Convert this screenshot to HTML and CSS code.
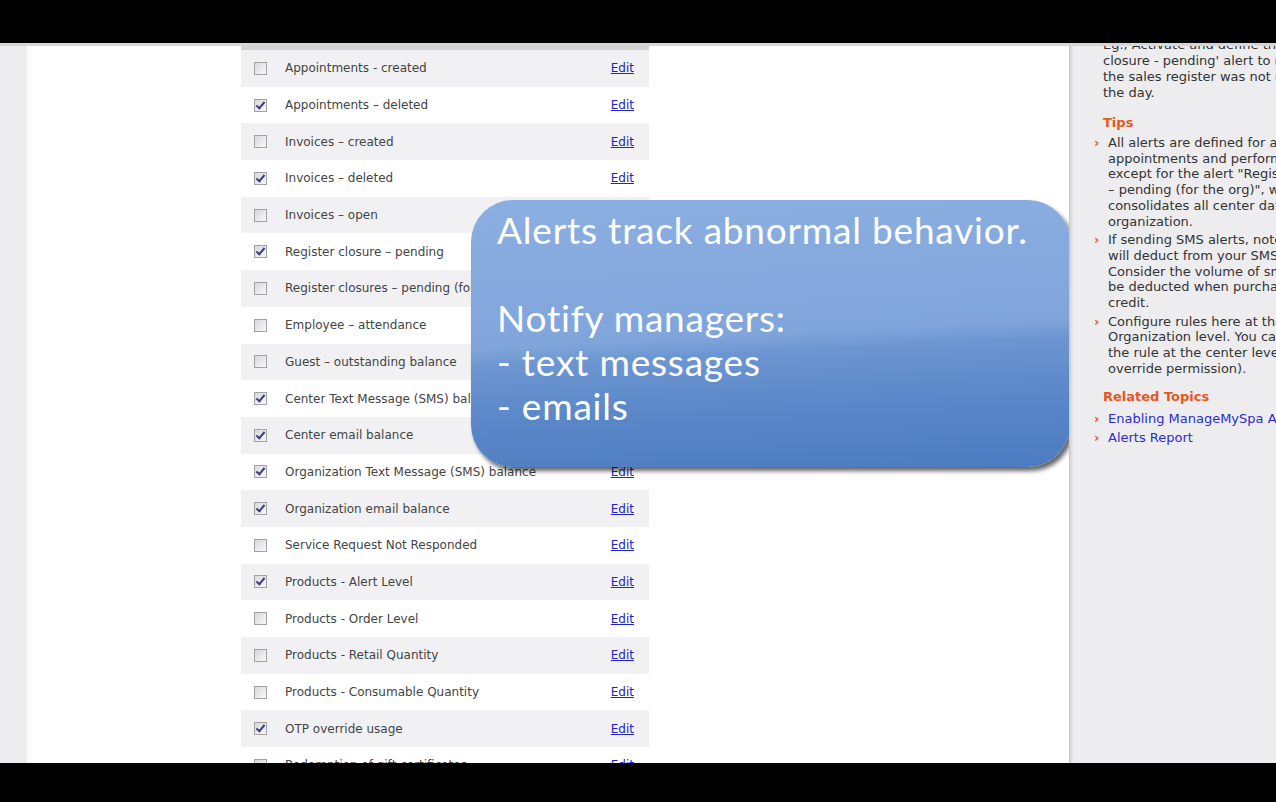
FILE: index.html
```html
<!DOCTYPE html>
<html>
<head>
  <title>Alerts</title>
  <link rel="stylesheet" href="styles.css">
</head>
<body>
  <div class="topbar"></div>
  <div class="screen">
    <div class="left-strip"></div>
    <div class="main">
      <div class="alerts-list">
        <div class="alerts-head"></div>
        <div class="alert-row"><span class="box"></span><span class="alert-name">Appointments - created</span><a href="#" class="edit">Edit</a></div>
        <div class="alert-row"><span class="box checked"></span><span class="alert-name">Appointments – deleted</span><a href="#" class="edit">Edit</a></div>
        <div class="alert-row"><span class="box"></span><span class="alert-name">Invoices – created</span><a href="#" class="edit">Edit</a></div>
        <div class="alert-row"><span class="box checked"></span><span class="alert-name">Invoices – deleted</span><a href="#" class="edit">Edit</a></div>
        <div class="alert-row"><span class="box"></span><span class="alert-name">Invoices – open</span><a href="#" class="edit">Edit</a></div>
        <div class="alert-row"><span class="box checked"></span><span class="alert-name">Register closure – pending</span><a href="#" class="edit">Edit</a></div>
        <div class="alert-row"><span class="box"></span><span class="alert-name">Register closures – pending (for the org)</span><a href="#" class="edit">Edit</a></div>
        <div class="alert-row"><span class="box"></span><span class="alert-name">Employee – attendance</span><a href="#" class="edit">Edit</a></div>
        <div class="alert-row"><span class="box"></span><span class="alert-name">Guest – outstanding balance</span><a href="#" class="edit">Edit</a></div>
        <div class="alert-row"><span class="box checked"></span><span class="alert-name">Center Text Message (SMS) balance</span><a href="#" class="edit">Edit</a></div>
        <div class="alert-row"><span class="box checked"></span><span class="alert-name">Center email balance</span><a href="#" class="edit">Edit</a></div>
        <div class="alert-row"><span class="box checked"></span><span class="alert-name">Organization Text Message (SMS) balance</span><a href="#" class="edit">Edit</a></div>
        <div class="alert-row"><span class="box checked"></span><span class="alert-name">Organization email balance</span><a href="#" class="edit">Edit</a></div>
        <div class="alert-row"><span class="box"></span><span class="alert-name">Service Request Not Responded</span><a href="#" class="edit">Edit</a></div>
        <div class="alert-row"><span class="box checked"></span><span class="alert-name">Products - Alert Level</span><a href="#" class="edit">Edit</a></div>
        <div class="alert-row"><span class="box"></span><span class="alert-name">Products - Order Level</span><a href="#" class="edit">Edit</a></div>
        <div class="alert-row"><span class="box"></span><span class="alert-name">Products - Retail Quantity</span><a href="#" class="edit">Edit</a></div>
        <div class="alert-row"><span class="box"></span><span class="alert-name">Products - Consumable Quantity</span><a href="#" class="edit">Edit</a></div>
        <div class="alert-row"><span class="box checked"></span><span class="alert-name">OTP override usage</span><a href="#" class="edit">Edit</a></div>
        <div class="alert-row"><span class="box"></span><span class="alert-name">Redemption of gift certificates</span><a href="#" class="edit">Edit</a></div>
      </div>

      <div class="callout">
        <p>Alerts track abnormal behavior.</p>
        <p>&nbsp;</p>
        <p>Notify managers:</p>
        <p>- text messages</p>
        <p>- emails</p>
      </div>
    </div>
    <div class="divider"></div>
    <div class="sidebar">
      <p class="intro">Eg., Activate and define the 'Register<br>closure - pending' alert to notify you if<br>the sales register was not closed for<br>the day.</p>

      <h3>Tips</h3>
      <ul class="tips">
        <li>All alerts are defined for a center:<br>appointments and performance,<br>except for the alert "Register closures<br>– pending (for the org)", which<br>consolidates all center data for the<br>organization.</li>
        <li>If sending SMS alerts, note that each<br>will deduct from your SMS credit.<br>Consider the volume of sms that will<br>be deducted when purchasing SMS<br>credit.</li>
        <li>Configure rules here at the<br>Organization level. You can override<br>the rule at the center level (with<br>override permission).</li>
      </ul>

      <h3 class="related">Related Topics</h3>
      <ul class="links">
        <li><a href="#">Enabling ManageMySpa Alerts</a></li>
        <li><a href="#">Alerts Report</a></li>
      </ul>
    </div>
  </div>
  <div class="bottombar"></div>
</body>
</html>
```

FILE: styles.css
```css
body {
  margin: 0;
  padding: 0;
  background-color: #000;
  font-family: "DejaVu Sans", Verdana, sans-serif;
  overflow: hidden;
}

.topbar {
  height: 43px;
  background-color: #000;
}

.bottombar {
  height: 39px;
  background-color: #000;
}

.screen {
  display: flex;
  height: 717px;
  border-top: 3px solid #d6d6d8;
  overflow: hidden;
}

.left-strip {
  width: 26px;
  background-color: #ececef;
  border-right: 2px solid #f4f4f6;
}

.main {
  flex: 1;
  position: relative;
  background-color: #fff;
  padding-left: 213px;
  overflow: hidden;
}

.divider {
  width: 4px;
  background: linear-gradient(to right, #c4c4c6, #dcdcde, #e8e8ea);
}

.alerts-list {
  width: 408px;
}

.alerts-head {
  height: 4px;
  background-color: #d2d2d4;
}

.alert-row {
  display: flex;
  align-items: center;
  height: 36.7px;
  font-size: 12px;
  color: #444;
}

.alert-row:nth-child(even) {
  background-color: #f1f1f3;
}

.box {
  position: relative;
  width: 11px;
  height: 11px;
  margin-left: 13px;
  margin-right: 18px;
  border: 1px solid #a2a2a6;
  background: linear-gradient(135deg, #d8d8dc, #f8f8fa);
}

.box.checked::after {
  content: "";
  position: absolute;
  left: 3px;
  top: 0px;
  width: 3px;
  height: 7px;
  border-right: 2px solid #3d3d80;
  border-bottom: 2px solid #3d3d80;
  transform: rotate(40deg);
}

.alert-name {
  flex: 1;
  white-space: nowrap;
}

.edit {
  color: #2323cc;
  margin-right: 15px;
}

.callout {
  position: absolute;
  left: 443px;
  top: 154px;
  width: 599px;
  height: 267px;
  box-sizing: border-box;
  padding: 8px 0 0 26px;
  border-radius: 42px;
  background: linear-gradient(177deg, #8cafe1 0%, #80a5db 50%, #6d96d1 56%, #5a87c8 75%, #4b7bc1 100%);
  box-shadow: 3px 4px 4px rgba(0, 0, 0, 0.6);
  color: #fff;
  font-family: Lato, "Open Sans", sans-serif;
  font-size: 37px;
  line-height: 44px;
  letter-spacing: 0.8px;
  font-variant-ligatures: none;
}

.callout p {
  margin: 0;
  white-space: nowrap;
}

.sidebar {
  width: 203px;
  background-color: #ededf0;
  padding-left: 30px;
  box-sizing: border-box;
  font-size: 13px;
  color: #333;
  white-space: nowrap;
  overflow: hidden;
}

.sidebar p {
  margin: 0;
}

.intro {
  margin-top: -9px !important;
  line-height: 16px;
}

.sidebar h3 {
  margin: 14px 0 4px 0;
  font-size: 13px;
  line-height: 16px;
  color: #e8561b;
}

.sidebar ul {
  list-style: none;
  margin: 0;
  padding: 0 0 0 5px;
}

.tips li {
  position: relative;
  line-height: 15.7px;
  margin-bottom: 3px;
}

.sidebar li::before {
  content: "›";
  position: absolute;
  left: -14px;
  top: 0;
  color: #e8561b;
  font-weight: bold;
}

.sidebar h3.related {
  margin-top: 12px;
}

.links li {
  position: relative;
  line-height: 19px;
}

.links a {
  color: #2b2bd2;
  text-decoration: none;
}
```
